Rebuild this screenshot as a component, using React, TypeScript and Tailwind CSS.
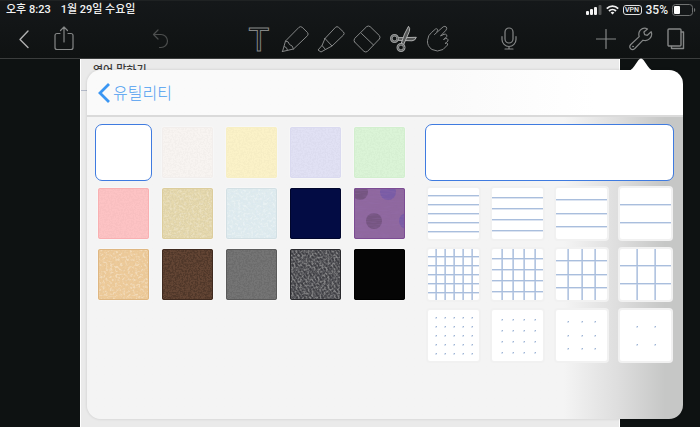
import { useState } from "react";
import type { ReactNode } from "react";

type Paper = {
  id: string;
  name: string;
  color: string;
  edge: string;
  // speckle layers drawn over the base colour
  noise?: { filter: string; opacity: number }[];
  dots?: boolean;
};

type Ruling = {
  id: string;
  kind: "lines" | "grid" | "dots";
  marks: number[];
};

const PAPERS: Paper[] = [
  { id: "white", name: "White", color: "#ffffff", edge: "#ffffff" },
  { id: "linen", name: "Linen", color: "#f8f4f1", edge: "#f2eeec", noise: [{ filter: "noise-dark", opacity: 0.02 }] },
  { id: "yellow", name: "Yellow", color: "#fbf2c8", edge: "#f7efc4", noise: [{ filter: "noise-dark", opacity: 0.02 }] },
  { id: "lilac", name: "Lilac", color: "#e1e1f4", edge: "#dadaf0", noise: [{ filter: "noise-dark", opacity: 0.02 }] },
  { id: "green", name: "Green", color: "#dbf4d7", edge: "#d2efce", noise: [{ filter: "noise-dark", opacity: 0.02 }] },
  { id: "pink", name: "Pink", color: "#fdc3c4", edge: "#f9b0b2", noise: [{ filter: "noise-dark", opacity: 0.02 }] },
  { id: "sand", name: "Sand", color: "#e6d9ae", edge: "#dccd9c", noise: [{ filter: "noise-light", opacity: 0.2 }, { filter: "noise-dark", opacity: 0.03 }] },
  { id: "ice", name: "Ice", color: "#dfebee", edge: "#d3e0e4", noise: [{ filter: "noise-light", opacity: 0.3 }, { filter: "noise-blue", opacity: 0.4 }] },
  { id: "navy", name: "Navy", color: "#030c44", edge: "#01062c" },
  { id: "polka", name: "Polka dots", color: "#8f689f", edge: "#7c4c93", dots: true, noise: [{ filter: "noise-weave", opacity: 0.25 }] },
  { id: "cork", name: "Cork", color: "#edca99", edge: "#dfb782", noise: [{ filter: "noise-light", opacity: 0.3 }, { filter: "noise-brown", opacity: 0.45 }] },
  { id: "leather", name: "Leather", color: "#634534", edge: "#3f2a1f", noise: [{ filter: "noise-dark", opacity: 0.2 }] },
  { id: "gray", name: "Gray", color: "#757575", edge: "#5a5a5a", noise: [{ filter: "noise-dark", opacity: 0.08 }] },
  { id: "denim", name: "Denim", color: "#3e3e43", edge: "#2a2a2d", noise: [{ filter: "noise-twill", opacity: 0.4 }] },
  { id: "black", name: "Black", color: "#050505", edge: "#000000" },
];

const MARKS = [
  [8, 17, 26, 35, 44],
  [10, 21, 32, 43],
  [12, 26, 39],
  [17, 35],
];

const RULINGS: Ruling[] = (["lines", "grid", "dots"] as const).flatMap((kind) =>
  MARKS.map((marks) => ({ id: `${kind}-${marks.length}`, kind, marks }))
);

function NoiseFilters() {
  return (
    <svg className="absolute h-0 w-0" aria-hidden="true">
      <defs>
        <filter id="noise-dark" x="0" y="0" width="1" height="1">
          <feTurbulence type="fractalNoise" baseFrequency="0.6" numOctaves="2" seed="3" />
          <feColorMatrix values="0 0 0 0 0  0 0 0 0 0  0 0 0 0 0  4 0 0 0 -1.6" />
        </filter>
        <filter id="noise-light" x="0" y="0" width="1" height="1">
          <feTurbulence type="fractalNoise" baseFrequency="0.4" numOctaves="2" seed="8" />
          <feColorMatrix values="0 0 0 0 1  0 0 0 0 1  0 0 0 0 1  5 0 0 0 -2.4" />
        </filter>
        <filter id="noise-blue" x="0" y="0" width="1" height="1">
          <feTurbulence type="fractalNoise" baseFrequency="0.4" numOctaves="2" seed="5" />
          <feColorMatrix values="0 0 0 0 0.68  0 0 0 0 0.8  0 0 0 0 0.86  5 0 0 0 -2.2" />
        </filter>
        <filter id="noise-brown" x="0" y="0" width="1" height="1">
          <feTurbulence type="fractalNoise" baseFrequency="0.45" numOctaves="2" seed="12" />
          <feColorMatrix values="0 0 0 0 0.78  0 0 0 0 0.55  0 0 0 0 0.3  5 0 0 0 -2.3" />
        </filter>
        <filter id="noise-weave" x="0" y="0" width="1" height="1">
          <feTurbulence type="fractalNoise" baseFrequency="0.08 0.6" numOctaves="2" seed="2" />
          <feColorMatrix values="0 0 0 0 0.3  0 0 0 0 0.15  0 0 0 0 0.4  4 0 0 0 -1.7" />
        </filter>
        <filter id="noise-twill" x="0" y="0" width="1" height="1">
          <feTurbulence type="fractalNoise" baseFrequency="0.5" numOctaves="2" seed="4" />
          <feColorMatrix values="0 0 0 0 0.6  0 0 0 0 0.6  0 0 0 0 0.58  5 0 0 0 -2.2" />
        </filter>
        <pattern id="twill" width="3" height="4" patternUnits="userSpaceOnUse" patternTransform="rotate(-35)">
          <rect width="1" height="4" fill="#77777a" />
        </pattern>
      </defs>
    </svg>
  );
}

function PaperArt({ paper }: { paper: Paper }) {
  return (
    <svg viewBox="0 0 51 51" className="block h-full w-full rounded-[2px]" aria-hidden="true">
      <rect width="51" height="51" fill={paper.color} />
      {paper.dots && (
        <>
          <circle cx="6" cy="4" r="8" fill="#755581" />
          <circle cx="34" cy="4" r="8" fill="#795ca6" />
          <circle cx="20" cy="33" r="8" fill="#755581" />
          <circle cx="53" cy="33" r="8" fill="#795ca6" />
        </>
      )}
      {paper.id === "denim" && <rect width="51" height="51" fill="url(#twill)" opacity="0.5" />}
      {paper.noise?.map((n) => (
        <rect key={n.filter} width="51" height="51" filter={`url(#${n.filter})`} opacity={n.opacity} />
      ))}
      <rect x="0.5" y="0.5" width="50" height="50" rx="1.5" fill="none" stroke={paper.edge} />
    </svg>
  );
}

function RulingArt({ kind, marks }: { kind: Ruling["kind"]; marks: number[] }) {
  return (
    <svg viewBox="0 0 51 51" className="block h-full w-full" aria-hidden="true">
      {kind === "dots" &&
        marks.flatMap((y) =>
          marks.map((x) => (
            <g key={`${x}-${y}`}>
              <rect x={x - 1} y={y - 1} width="2" height="2" fill="#dbe4f1" />
              <rect x={x} y={y - 1} width="1" height="1" fill="#9fb4d4" />
            </g>
          ))
        )}
      {kind === "grid" &&
        marks.map((m) => (
          <g key={m}>
            <rect x={m - 1} y="0" width="1" height="51" fill="#cad7ea" />
            <rect x={m} y="0" width="1" height="51" fill="#b3c5e1" />
          </g>
        ))}
      {kind !== "dots" &&
        marks.map((m) => (
          <g key={m}>
            <rect x="0" y={m - 1} width="51" height="1" fill="#a9bedd" />
            <rect x="0" y={m} width="51" height="1" fill="#b9cae4" opacity="0.5" />
          </g>
        ))}
    </svg>
  );
}

function ToolButton({ label, className = "w-9", children }: { label: string; className?: string; children: ReactNode }) {
  return (
    <button aria-label={label} className={`flex h-10 shrink-0 items-center justify-center text-[#858787] ${className}`}>
      {children}
    </button>
  );
}

function Icon({ size = 28, children, className = "" }: { size?: number; children: ReactNode; className?: string }) {
  return (
    <svg
      width={size}
      height={size}
      viewBox={`0 0 ${size} ${size}`}
      fill="none"
      stroke="currentColor"
      strokeWidth="1"
      strokeLinecap="round"
      strokeLinejoin="round"
      className={className}
      aria-hidden="true"
    >
      {children}
    </svg>
  );
}

function StatusBar() {
  return (
    <div className="flex h-[18px] items-center justify-between pl-[6px] pr-1 font-['Roboto','Noto_Sans_CJK_KR',sans-serif] text-[11px] leading-[18px] font-medium text-[#f2f2f2]">
      <div className="flex gap-[10px]">
        <span>오후 8:23</span>
        <span>1월 29일 수요일</span>
      </div>
      <div className="flex items-center gap-1">
        <svg width="16" height="10" viewBox="0 0 16 10" fill="#f2f2f2" aria-hidden="true">
          <rect x="0" y="6" width="3" height="4" rx="1" />
          <rect x="4" y="4" width="3" height="6" rx="1" />
          <rect x="8" y="2" width="3" height="8" rx="1" />
          <rect x="12.5" y="0" width="3" height="10" rx="1" fill="#505252" />
        </svg>
        <svg width="13" height="10" viewBox="0 0 13 10" fill="none" stroke="#f2f2f2" strokeWidth="1.8" aria-hidden="true">
          <path d="M0.8 3.6a8 8 0 0 1 11.4 0" />
          <path d="M3 6a5 5 0 0 1 7 0" />
          <path d="M6.5 9.6 4.6 7.6a2.8 2.8 0 0 1 3.8 0Z" fill="#f2f2f2" stroke="none" />
        </svg>
        <span className="flex h-[10px] w-[19px] items-center justify-center rounded-[3px] border border-[#e0e0e0] text-[7px] leading-[8px]">
          VPN
        </span>
        <span className="text-[12px]">35%</span>
        <svg width="24" height="12" viewBox="0 0 24 12" fill="none" aria-hidden="true">
          <rect x="0.5" y="0.5" width="20" height="11" rx="3" stroke="#707272" />
          <rect x="2" y="2" width="6" height="8" rx="1" fill="#ffffff" />
          <path d="M22 4c1.600.4 1.600 3.600 0 4Z" fill="#707272" />
        </svg>
      </div>
    </div>
  );
}

function Toolbar() {
  return (
    <div className="flex h-10 items-center border-b border-[#3b3d3d] pl-2 pr-[7px]">
      <ToolButton label="뒤로" className="w-8">
        <Icon size={20} className="text-[#b0b1b1]">
          <path d="M14 2 6 10.500l8 8" strokeWidth="1.400" />
        </Icon>
      </ToolButton>
      <ToolButton label="공유" className="ml-2 w-8">
        <Icon size={26}>
          <path d="M9 7.500H6a2 2 0 0 0-2 2V21.500a2 2 0 0 0 2 2h14a2 2 0 0 0 2-2V9.500a2 2 0 0 0-2-2h-3M13 16V1M9.500 4.500 13 1 16.500 4.500" strokeWidth="1.200" />
        </Icon>
      </ToolButton>
      <ToolButton label="실행 취소" className="ml-[65px] w-8">
        <Icon size={20} className="text-[#4c4e4e]">
          <path d="M7 1 2.500 5.500 7 10M2.500 5.500H10a6.500 6.500 0 1 1 0 13H8.500" strokeWidth="1.200" />
        </Icon>
      </ToolButton>

      <div className="ml-16 flex">
        <ToolButton label="텍스트">
          <span className="font-['Liberation_Sans'] text-[34px] leading-10 font-normal text-transparent [-webkit-text-stroke:1px_#858787]">
            T
          </span>
        </ToolButton>
        <ToolButton label="펜">
          <Icon>
            <path d="M1.500 26.500 4.500 16 18 2.300q1.500-1.300 3.200 0l5.300 5.200q1.300 1.500 0 3.200L12.500 24 1.500 26.500Z" />
            <path d="M4.500 16q3.500 0 4 3.500 3.500.8 4 4.500M3.500 21.500q2.500.5 3 3.500" />
          </Icon>
        </ToolButton>
        <ToolButton label="형광펜">
          <Icon>
            <path d="M8 13.500 18.500 2.300q1.500-1.300 3 0l5 4.700q1.300 1.500 0 3L15 21 8 13.500Z" />
            <path d="M8 13.500 5 20.500l3.500 4L15 21M5 20.500 1 25l3 2 4.500-2.500" />
          </Icon>
        </ToolButton>
        <ToolButton label="지우개">
          <Icon>
            <path d="M1.600 17q-1.200-1.700 0-3.500L13.700 1.600q1.700-1.200 3.400 0l9.300 9q1.200 1.700 0 3.400L14.500 26.400q-1.700 1.200-3.500 0L1.600 17ZM8.500 8.500 20.500 20" />
          </Icon>
        </ToolButton>
        <ToolButton label="가위">
          <Icon className="text-[#b0b1b1]">
            <path d="M9 12.700 27.300 12.300Q26.500 15.500 23 15.800L9 15.300Z" fill="#555757" />
            <path d="M12 19 15.500 9 19.500 1.300Q21.500 3.500 20.300 6.500L14.500 20Z" fill="#555757" />
            <circle cx="5.500" cy="13.500" r="3.200" stroke="#a2a4a4" strokeWidth="2.600" />
            <circle cx="5.500" cy="13.500" r="3.200" stroke="#555757" strokeWidth="0.800" />
            <circle cx="12" cy="22.500" r="3.200" stroke="#a2a4a4" strokeWidth="2.600" />
            <circle cx="12" cy="22.500" r="3.200" stroke="#555757" strokeWidth="0.800" />
          </Icon>
        </ToolButton>
        <ToolButton label="손가락">
          <Icon>
            <path d="M9.500 9.500 18.200 1.800Q20 .8 21.300 2q1 1.500-.3 3.200L15.500 11 19 9.300q2-.6 2.800.8.500 1.500-1.300 2.900L18.500 14.500l2.200-1q1.700-.3 2.300 1.200.3 1.500-1.200 2.500L20 18.500l1.800-.5q1.200.3.700 2L18 24.500q-5.500 3-11 0-5-3.300-4.500-9Q3 10 6.500 7.500L10.500 4q1.200-.7 2 .3.500 1.200-.5 2.300" />
          </Icon>
        </ToolButton>
      </div>

      <ToolButton label="녹음" className="ml-[34px] w-9">
        <Icon size={24}>
          <rect x="8" y="1" width="8" height="15" rx="4" strokeWidth="1.200" />
          <path d="M5 9.500V12.500a7 7 0 0 0 14 0V9.500M12 19.500V22M8 22h8" strokeWidth="1.200" />
        </Icon>
      </ToolButton>

      <div className="ml-auto flex">
        <ToolButton label="추가" className="w-[35px]">
          <Icon size={20}>
            <path d="M10 0.500v19M0.500 10h19" strokeWidth="1.200" />
          </Icon>
        </ToolButton>
        <ToolButton label="도구" className="w-[35px]">
          <Icon size={24}>
            <path
              d="M18.500 2Q14.500 0 11.300 3.200 9 6 10.200 9.600L1.800 17.500q-2 2.200-.2 4.200 2 1.800 4.200-.2L14 13.200q4 1.200 6.700-1.500 3-3 1.500-7L18.300 8.300 15.600 7.600 14.900 5Z"
              strokeWidth="1.200"
            />
            <circle cx="4" cy="19.500" r="0.500" />
          </Icon>
        </ToolButton>
        <ToolButton label="페이지" className="w-[35px]">
          <Icon size={22}>
            <rect x="3" y="1" width="13" height="17" rx="1" strokeWidth="1.400" />
            <path d="M16.500 4H18.500V20.500H6.500V18.500" strokeWidth="1.400" />
          </Icon>
        </ToolButton>
      </div>
    </div>
  );
}

// selected tiles keep a white margin inside a thin blue frame
const SELECTED = "rounded-[4px] shadow-[0_0_0_2px_#fff] outline outline-offset-2 outline-[#3f7be0]";

function UtilityPopover() {
  const [paper, setPaper] = useState("white");
  const [ruling, setRuling] = useState("none");

  return (
    <section className="absolute top-[70px] right-[17px] left-[87px] rounded-[14px] shadow-[0_0_3px_rgba(0,0,0,0.15)]">
      <svg width="30" height="13" viewBox="0 0 30 13" className="absolute right-[27px] bottom-full -mb-px" aria-hidden="true">
        <path d="M0 13Q5 13 8 8.500L12.500 2Q15 -1 17.500 2L22 8.500Q25 13 30 13Z" fill="#ffffff" />
      </svg>

      <div className="overflow-hidden rounded-[14px]">
        <header className="flex h-[47px] items-center border-b-2 border-[#dadada] bg-linear-to-r from-[#fafafa] from-60% to-white to-85% px-[10px]">
          <button className="flex items-center gap-[2px] text-[#4a9df0]">
            <svg width="14" height="22" viewBox="0 0 14 22" fill="none" stroke="#3a96f3" strokeWidth="2.800" aria-hidden="true">
              <path d="M12 2 3 11l9 9" />
            </svg>
            <span className="text-[16px] leading-6 font-light">유틸리티</span>
          </button>
        </header>

        <div className="flex justify-between bg-linear-to-r from-[#f4f4f4] from-80% via-[#dedede] via-89% to-[#c6c7c6] to-97% pt-[10px] pr-3 pb-[58px] pl-[11px]">
          <div className="grid grid-cols-5 content-start gap-x-[13px] gap-y-[10px]">
            {PAPERS.map((p) => (
              <button
                key={p.id}
                aria-label={p.name}
                aria-pressed={paper === p.id}
                onClick={() => setPaper(p.id)}
                className={`size-[51px] ${paper === p.id ? SELECTED : "rounded-[2px] shadow-[0_0_2px_#fff]"}`}
              >
                <PaperArt paper={p} />
              </button>
            ))}
          </div>

          <div className="grid grid-cols-4 content-start gap-x-[13px] gap-y-[10px]">
            <button
              aria-label="Blank"
              aria-pressed={ruling === "none"}
              onClick={() => setRuling("none")}
              className={`col-span-4 h-[51px] bg-white ${ruling === "none" ? SELECTED : "rounded-[3px]"}`}
            />
            {RULINGS.map((r) => (
              <button
                key={r.id}
                aria-label={r.id}
                aria-pressed={ruling === r.id}
                onClick={() => setRuling(r.id)}
                className={`size-[51px] bg-white ${ruling === r.id ? SELECTED : "rounded-[2px] shadow-[0_0_0_2px_#f1f1f1]"}`}
              >
                <RulingArt kind={r.kind} marks={r.marks} />
              </button>
            ))}
          </div>
        </div>
      </div>
    </section>
  );
}

export default function App() {
  return (
    <div className="relative flex min-h-screen flex-col overflow-hidden bg-[#0e1212] font-['Inter','Noto_Sans_CJK_KR',sans-serif]">
      <NoiseFilters />
      <div className="border-t border-[#1f2223] bg-linear-to-b from-[#15181a] to-[#0f1212]">
        <StatusBar />
        <Toolbar />
      </div>
      <main className="mx-20 flex-1 border-x border-white bg-[#eaeaea] px-3 pt-[3px] text-[#3a3a3a]">
        <p className="text-[11px] leading-4 font-medium">영어 말하기</p>
        <hr className="-mx-3 mt-3 border-[#b3bac9]" />
      </main>
      <UtilityPopover />
    </div>
  );
}
